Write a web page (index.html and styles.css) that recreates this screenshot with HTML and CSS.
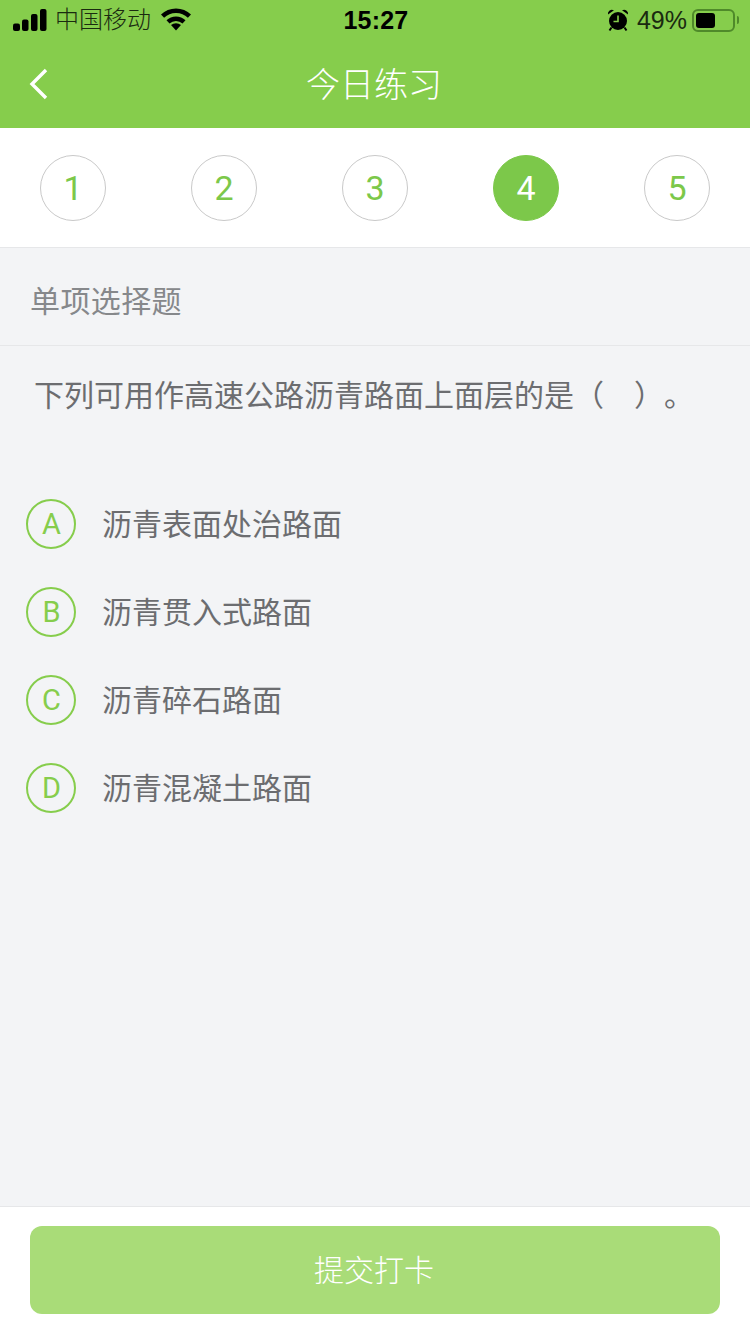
FILE: index.html
```html
<!DOCTYPE html>
<html lang="zh-CN">
<head>
<meta charset="utf-8">
<title>今日练习</title>
<link rel="stylesheet" href="styles.css">
</head>
<body>
<div class="page">
  <header class="header">
    <div class="status">
      <div class="status-left">
        <svg class="signal" width="34" height="22" viewBox="0 0 34 22"><rect x="0" y="14.500" width="7" height="7.500" rx="2"/><rect x="9" y="10.500" width="6.500" height="11.500" rx="2"/><rect x="18" y="5" width="6.500" height="17" rx="2"/><rect x="27" y="0" width="6.500" height="22" rx="2"/></svg>
        <span class="carrier">中国移动</span>
        <svg class="wifi" width="30" height="23" viewBox="0 0 30 23"><path d="M15 22.500l-5-5.400a7.400 7.400 0 0 1 10 0z"/><path d="M15 8.500c3.700 0 7 1.400 9.500 3.700l-3 3.300a9.700 9.700 0 0 0-13 0l-3-3.300C8 9.900 11.300 8.500 15 8.500z"/><path d="M15 .5c5.800 0 11 2.200 15 5.900l-3.100 3.400A17.200 17.200 0 0 0 15 5.100 17.200 17.200 0 0 0 3.100 9.800L0 6.400C4 2.700 9.200.5 15 .5z"/></svg>
      </div>
      <div class="time">15:27</div>
      <div class="status-right">
        <svg class="alarm" width="22" height="24" viewBox="0 0 22 24"><circle cx="11" cy="13" r="9"/><path d="M1 6.500a4 4 0 0 1 6-4.200zM21 6.500a4 4 0 0 0-6-4.200z"/><path d="M4.500 19.500l-2 3M17.500 19.500l2 3" stroke="#000" stroke-width="2" fill="none"/><path d="M11 7.500v6H6.500" stroke="#86cd4c" stroke-width="1.600" fill="none"/></svg>
        <span class="battery-text">49%</span>
        <div class="battery"><div class="battery-level"></div></div>
        <div class="battery-cap"></div>
      </div>
    </div>
    <div class="nav">
      <svg class="back" width="20" height="32" viewBox="0 0 20 32"><path d="M17 2L3 16l14 14" fill="none" stroke="#fff" stroke-width="3.400"/></svg>
      <h1 class="title">今日练习</h1>
    </div>
  </header>

  <nav class="steps">
    <div class="step">1</div>
    <div class="step">2</div>
    <div class="step">3</div>
    <div class="step active">4</div>
    <div class="step">5</div>
  </nav>

  <main class="content">
    <div class="type">单项选择题</div>
    <p class="question">下列可用作高速公路沥青路面上面层的是（　）。</p>
    <ul class="options">
      <li class="option"><span class="letter">A</span><span class="option-text">沥青表面处治路面</span></li>
      <li class="option"><span class="letter">B</span><span class="option-text">沥青贯入式路面</span></li>
      <li class="option"><span class="letter">C</span><span class="option-text">沥青碎石路面</span></li>
      <li class="option"><span class="letter">D</span><span class="option-text">沥青混凝土路面</span></li>
    </ul>
  </main>

  <footer class="footer">
    <button class="submit" type="button">提交打卡</button>
  </footer>
</div>
</body>
</html>
```
FILE: styles.css
```css
* { box-sizing: border-box; }
html, body { margin: 0; padding: 0; }
body {
  width: 750px;
  height: 1334px;
  overflow: hidden;
  font-family: "Liberation Sans", "Noto Sans CJK SC", sans-serif;
  font-weight: 400;
  text-spacing-trim: space-all;
  background: #f3f4f6;
}
.page { display: flex; flex-direction: column; height: 1334px; }

.header { height: 128px; background: #86cd4c; flex: none; }
.status {
  height: 40px;
  padding: 0 11px 0 13px;
  display: grid;
  grid-template-columns: 1fr auto 1fr;
  align-items: center;
  color: #000;
}
.status-left { display: flex; align-items: center; }
.signal { margin-right: 8px; }
.carrier { font-size: 24px; line-height: 40px; margin-right: 10px; color: #1a2a10; font-weight: 300; }
.wifi { margin-top: -1px; }
.time { font-size: 25px; font-weight: 700; letter-spacing: 0.2px; }
.status-right { display: flex; align-items: center; justify-content: flex-end; }
.alarm { margin-right: 8px; }
.battery-text { font-size: 25px; color: #1a2a10; margin-right: 5px; }
.battery {
  width: 43px;
  height: 23px;
  border: 2px solid #4f8a2a;
  border-radius: 6px;
  padding: 2px;
}
.battery-level { width: 19px; height: 15px; background: #000; border-radius: 3px; }
.battery-cap { width: 2px; height: 8px; margin-left: 2px; background: #4f8a2a; border-radius: 0 2px 2px 0; }

.nav { height: 88px; position: relative; display: flex; align-items: center; justify-content: center; }
.back { position: absolute; left: 29px; top: 28px; }
.title {
  margin: 0;
  font-size: 34px;
  font-weight: 300;
  color: #fff;
  line-height: 88px;
  height: 88px;
  transform: translate(-1px, 1px);
}

.steps {
  height: 120px;
  flex: none;
  background: #fff;
  border-bottom: 1px solid #e6e7e9;
  padding: 27px 40px 0;
  display: flex;
  justify-content: space-between;
  align-items: flex-start;
}
.step {
  width: 66px;
  height: 66px;
  border-radius: 50%;
  border: 1px solid #c9c9c9;
  color: #7cc84a;
  font-family: Roboto, "Liberation Sans", sans-serif;
  font-size: 34px;
  font-weight: 400;
  display: flex;
  align-items: center;
  justify-content: center;
}
.step.active { background: #7cc84a; border-color: #7cc84a; color: #fff; }

.content { flex: 1; display: flex; flex-direction: column; }
.type {
  height: 98px;
  border-bottom: 1px solid #e6e7e9;
  padding-left: 30px;
  font-size: 30px;
  letter-spacing: 0.4px;
  line-height: 108px;
  color: #86888b;
}
.question {
  margin: 0;
  padding: 32px 0 0 34px;
  font-size: 30px;
  line-height: 36px;
  color: #6c6d70;
  height: 134px;
}
.options { list-style: none; margin: 0; padding: 0 0 0 26px; }
.option { height: 88px; display: flex; align-items: center; }
.letter {
  width: 50px;
  height: 50px;
  border-radius: 50%;
  border: 2px solid #86cd4c;
  color: #86cd4c;
  font-family: Roboto, "Liberation Sans", sans-serif;
  font-size: 29px;
  font-weight: 400;
  padding-left: 1px;
  display: flex;
  align-items: center;
  justify-content: center;
  margin-right: 26px;
  flex: none;
}
.option-text { font-size: 30px; color: #6c6d70; padding-bottom: 4px; }

.footer {
  height: 128px;
  flex: none;
  background: #fff;
  border-top: 1px solid #e6e7e9;
  padding: 19px 30px 0;
}
.submit {
  width: 690px;
  height: 88px;
  border: 0;
  border-radius: 12px;
  background: #a9dc78;
  color: #fff;
  font: inherit;
  font-size: 30px;
  font-weight: 300;
  padding: 0 2px 4px 0;
}
```
